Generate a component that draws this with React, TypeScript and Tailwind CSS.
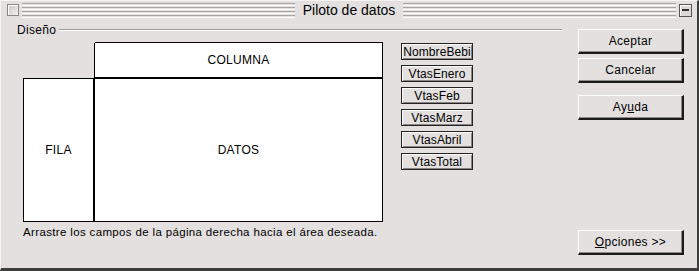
import React from "react";

const font = { fontFamily: '"Liberation Sans", Arial, sans-serif' };

function Stripes() {
  return (
    <div className="flex-1 flex flex-col gap-[1px] justify-center">
      <div className="h-[1px] bg-[#a9a4a4]" />
      <div className="h-[1px] bg-white" />
      <div className="h-[1px] bg-[#a9a4a4]" />
      <div className="h-[1px] bg-white" />
      <div className="h-[1px] bg-[#a9a4a4]" />
      <div className="h-[1px] bg-white" />
      <div className="h-[1px] bg-[#a9a4a4]" />
      <div className="h-[1px] bg-white" />
    </div>
  );
}

function Field({ label }: { label: string }) {
  return (
    <div className="h-[17px] w-[72px] border border-[#222] bg-[#e4e0e0] flex items-center justify-center text-[12px] tracking-[0.1px] text-black leading-none whitespace-nowrap overflow-hidden shadow-[inset_1px_1px_0_#fff,inset_-1px_-1px_0_#8a8585]">
      {label}
    </div>
  );
}

function Btn({ children }: { children: React.ReactNode }) {
  return (
    <div className="w-[106px] h-[25px] bg-[#e4e0e0] border-t border-l border-white border-r-2 border-b-2 border-r-[#1a1a1a] border-b-[#1a1a1a] shadow-[inset_-1px_-1px_0_#8f8a8a] flex items-center justify-center text-[12px] tracking-[0.3px] text-black">
      {children}
    </div>
  );
}

export default function App() {
  return (
    <div
      className="w-[699px] h-[271px] bg-[#e4e0e0] border-t border-l border-[#f4f2f2] border-r-2 border-r-[#3c3c3c] border-b-[3px] border-b-[#3c3c3c] flex flex-col overflow-hidden"
      style={font}
    >
      {/* Title bar */}
      <div className="h-[18px] flex items-center pl-[6px] pr-[5px] gap-[3px]">
        <div className="w-[12px] h-[12px] border border-[#8c8787] bg-[linear-gradient(135deg,#c9c5c5,#f2f0f0)] shadow-[inset_1px_1px_0_#fff]" />
        <Stripes />
        <div className="px-[5px] text-[14px] text-black leading-none">Piloto de datos</div>
        <Stripes />
        <div className="w-[13px] h-[13px] border border-[#555] bg-[#dcd8d8] flex items-center justify-center shadow-[inset_1px_1px_0_#fff]">
          <div className="w-[7px] h-[2px] bg-[#333]" />
        </div>
      </div>

      {/* Body */}
      <div className="flex flex-1">
        {/* Left section */}
        <div className="w-[561px] flex flex-col">
          <div className="flex items-center pl-[16px] mt-[4px] h-[13px]">
            <span className="text-[12px] tracking-[0.3px] text-black leading-none mr-[3px]">Diseño</span>
            <div className="flex-1 border-t border-[#a09b9b] border-b border-b-white" />
          </div>
          <div className="flex ml-[22px] mt-[6px]">
            <div className="mt-[36px] w-[72px] h-[144px] bg-white border border-black border-r-2 flex items-center justify-center text-[12px] tracking-[0.3px]">
              FILA
            </div>
            <div className="w-[288px] h-[180px] flex flex-col border border-black border-l-0">
              <div className="h-[36px] bg-white border-b-2 border-black flex items-center justify-center text-[12px] tracking-[0.3px] border-l border-l-black -ml-[1px]">
                COLUMNA
              </div>
              <div className="flex-1 bg-white flex items-center justify-center text-[12px] tracking-[0.3px]">
                DATOS
              </div>
            </div>
            <div className="ml-[18px] mt-[1px] flex flex-col gap-[5px]">
              <Field label="NombreBebi" />
              <Field label="VtasEnero" />
              <Field label="VtasFeb" />
              <Field label="VtasMarz" />
              <Field label="VtasAbril" />
              <Field label="VtasTotal" />
            </div>
          </div>
          <div className="ml-[22px] mt-[5px] text-[11.5px] tracking-[0.35px] text-black leading-none">
            Arrastre los campos de la página derecha hacia el área deseada.
          </div>
        </div>

        {/* Right buttons */}
        <div className="ml-[16px] flex flex-col pt-[10px]">
          <Btn>Aceptar</Btn>
          <div className="h-[4px]" />
          <Btn>Cancelar</Btn>
          <div className="h-[12px]" />
          <Btn>
            <span>
              Ay<span className="underline">u</span>da
            </span>
          </Btn>
          <div className="h-[110px]" />
          <Btn>
            <span>
              <span className="underline">O</span>pciones &gt;&gt;
            </span>
          </Btn>
        </div>
      </div>
    </div>
  );
}
